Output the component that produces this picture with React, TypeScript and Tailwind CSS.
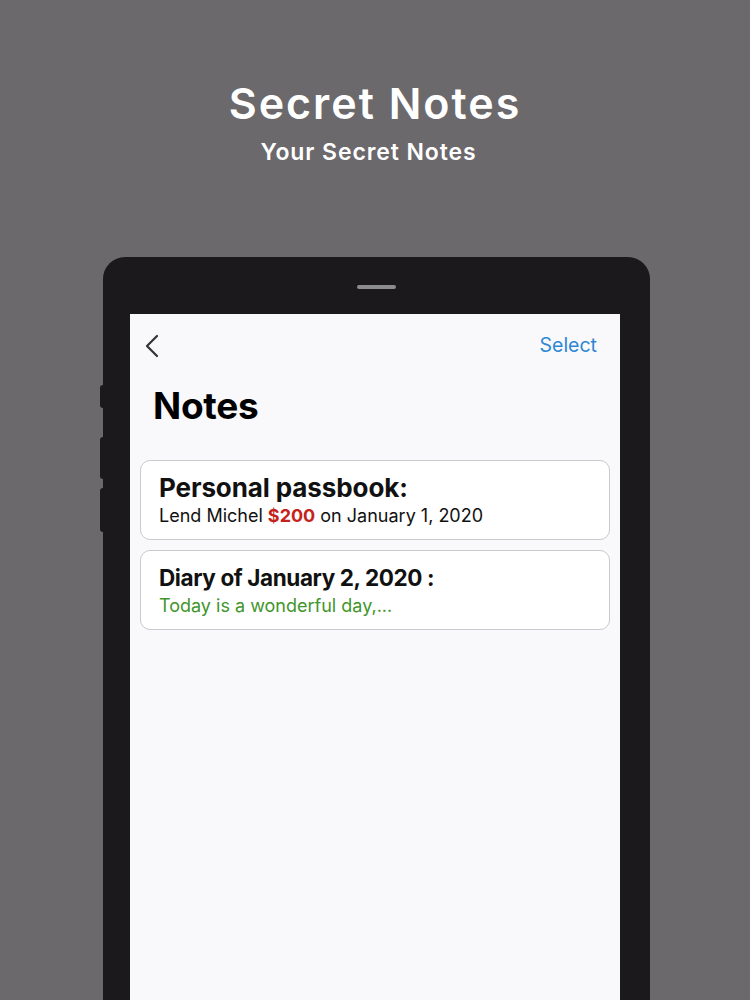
const NOTES = [
    {
        title: 'Personal passbook:',
        size: 'text-[26px] tracking-[-0.1px]',
        body: (
            <span className="text-[#111]">
                Lend Michel <span className="font-bold text-[#c4231c]">$200</span> on January 1, 2020
            </span>
        ),
    },
    {
        title: 'Diary of January 2, 2020 :',
        size: 'text-[22.5px] tracking-[-0.4px]',
        body: <span className="text-[#3f952b]">Today is a wonderful day,...</span>,
    },
];

export default function App() {
    return (
        <div className="h-[1000px] w-[750px] overflow-hidden bg-[#6b696c] font-['Inter',sans-serif]">
            {/* heading */}
            <div className="flex flex-col items-center pt-[78px] text-white">
                <h1 className="text-[43px] font-semibold leading-[50px] tracking-[2px]">Secret Notes</h1>
                <p className="mr-[13px] mt-[10px] text-[23px] font-semibold leading-[28px] tracking-[0.9px]">Your Secret Notes</p>
            </div>

            {/* tablet */}
            <div className="relative ml-[103px] mt-[91px] h-[800px] w-[547px] rounded-t-[22px] bg-[#1b191c] pl-[27px] pr-[30px] pt-[57px]">
                {/* side buttons */}
                <div className="absolute left-[-3px] top-[128px] h-[23px] w-[3px] rounded-l-sm bg-[#1b191c]" />
                <div className="absolute left-[-3px] top-[180px] h-[42px] w-[3px] rounded-l-sm bg-[#1b191c]" />
                <div className="absolute left-[-3px] top-[231px] h-[44px] w-[3px] rounded-l-sm bg-[#1b191c]" />
                {/* camera bar */}
                <div className="absolute left-[254px] top-[28px] h-[4px] w-[39px] rounded-full bg-[#8c8b8e]" />

                <div className="h-full bg-[#f9f8fb]">
                    <div className="flex h-[64px] items-center justify-between pl-[14px] pr-[23px]">
                        <svg width="16" height="24" viewBox="0 0 16 24" fill="none" stroke="#333" strokeWidth="2.2" strokeLinecap="round" strokeLinejoin="round">
                            <polyline points="13,2 3,12 13,22" />
                        </svg>
                        <span className="text-[19.5px] text-[#2d87d3]">Select</span>
                    </div>
                    <h2 className="pl-[23px] text-[37px] font-bold leading-[56px] tracking-[-0.3px] text-black">Notes</h2>

                    <div className="mt-[26px] flex flex-col gap-[10px] px-[10px]">
                        {NOTES.map((note) => (
                            <div
                                key={note.title}
                                className="h-[80px] rounded-[10px] border border-[#cac9cd] bg-white pl-[18px] pt-[12px]"
                            >
                                <div className={`${note.size} font-bold leading-[30px] text-[#111]`}>
                                    {note.title}
                                </div>
                                <div className="mt-[1px] text-[18px] leading-[24px]">{note.body}</div>
                            </div>
                        ))}
                    </div>
                </div>
            </div>
        </div>
    );
}
